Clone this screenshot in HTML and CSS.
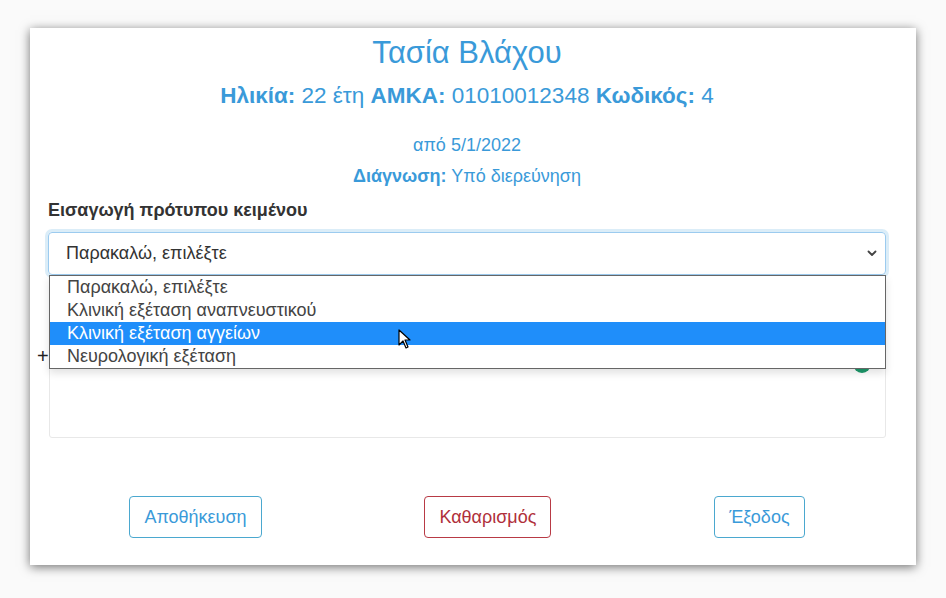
FILE: index.html
```html
<!DOCTYPE html>
<html lang="el">
<head>
    <meta charset="UTF-8">
    <meta name="viewport" content="width=device-width, initial-scale=1.0">
    <title>Ιστορικό ασθενή</title>
    <link rel="stylesheet" href="styles.css">
</head>
<body>
    <div class="modal">
        <h1 class="patient-name">Τασία Βλάχου</h1>
        <p class="patient-info">
            <b>Ηλικία:</b> 22 έτη <b>ΑΜΚΑ:</b> 01010012348 <b>Κωδικός:</b> 4
        </p>
        <p class="since">από 5/1/2022</p>
        <p class="diagnosis"><b>Διάγνωση:</b> Υπό διερεύνηση</p>

        <label class="field-label">Εισαγωγή πρότυπου κειμένου</label>
        <div class="select-wrap">
            <div class="select">
                <span>Παρακαλώ, επιλέξτε</span>
                <svg class="chevron" width="10" height="7" viewBox="0 0 10 7">
                    <path d="M1.5 1.5l3.5 3.5 3.5-3.5" fill="none" stroke="#444" stroke-width="1.8" stroke-linecap="round" stroke-linejoin="round"/>
                </svg>
            </div>
            <ul class="options">
                <li>Παρακαλώ, επιλέξτε</li>
                <li>Κλινική εξέταση αναπνευστικού</li>
                <li class="active">Κλινική εξέταση αγγείων</li>
                <li>Νευρολογική εξέταση</li>
            </ul>
            <svg class="cursor" width="14" height="20" viewBox="0 0 14 20">
                <path d="M1 1v15l4-4 3 7 2-1-3-7h5z" fill="#fff" stroke="#000" stroke-width="1.2" stroke-linejoin="round"/>
            </svg>
        </div>

        <div class="editor">
            <span class="editor-add">+</span>
            <span class="editor-dot"></span>
        </div>

        <div class="actions">
            <button class="btn btn-blue">Αποθήκευση</button>
            <button class="btn btn-red">Καθαρισμός</button>
            <button class="btn btn-blue">Έξοδος</button>
        </div>
    </div>
</body>
</html>
```

FILE: styles.css
```css
body {
    margin: 0;
    padding: 28px 30px;
    background-color: #fafafa;
    font-family: "Liberation Sans", Arial, sans-serif;
    color: #333;
}

.modal {
    width: 886px;
    height: 537px;
    box-sizing: border-box;
    padding: 7px 30px 0 18px;
    background-color: #fff;
    box-shadow: 0 2px 10px rgba(0, 0, 0, 0.55);
}

.patient-name {
    margin: 0;
    text-align: center;
    font-size: 31px;
    line-height: 36px;
    font-weight: normal;
    color: #3a9ad9;
}

.patient-info {
    margin: 12px 0 0;
    text-align: center;
    font-size: 22.5px;
    line-height: 26px;
    color: #3a9ad9;
}

.since,
.diagnosis {
    margin: 0;
    text-align: center;
    font-size: 18px;
    line-height: 20px;
    color: #3a9ad9;
}

.since {
    margin-top: 26px;
}

.diagnosis {
    margin-top: 11px;
}

.field-label {
    display: block;
    margin-top: 14px;
    font-size: 18px;
    line-height: 20px;
    font-weight: bold;
    color: #333;
}

.select-wrap {
    position: relative;
    margin-top: 12px;
}

.select {
    height: 43px;
    box-sizing: border-box;
    padding: 0 8px 0 17px;
    display: flex;
    align-items: center;
    justify-content: space-between;
    border: 1px solid #9ccbef;
    border-radius: 4px;
    box-shadow: 0 0 0 3px rgba(58, 154, 217, 0.18);
    font-size: 18px;
    color: #333;
}

.options {
    position: absolute;
    top: 43px;
    left: 1px;
    right: 0;
    margin: 0;
    padding: 0;
    list-style: none;
    background-color: #fff;
    border: 1px solid #666;
    box-shadow: 0 4px 8px rgba(0, 0, 0, 0.12);
    z-index: 2;
}

.options li {
    height: 23px;
    line-height: 22px;
    padding-left: 17px;
    font-size: 18px;
    color: #444;
}

.options li.active {
    background-color: #1f8efa;
    color: #fff;
}

.cursor {
    position: absolute;
    left: 350px;
    top: 97px;
    z-index: 3;
}

.editor {
    position: relative;
    margin-top: 69px;
    margin-left: 1px;
    height: 92px;
    border: 1px solid #e8e8e8;
    border-radius: 3px;
}

.editor-add {
    position: absolute;
    left: -13px;
    top: 0;
    font-size: 20px;
    line-height: 22px;
    color: #222;
}

.editor-dot {
    position: absolute;
    right: 14px;
    top: 10px;
    width: 18px;
    height: 18px;
    border-radius: 50%;
    background-color: #1d9a6c;
}

.actions {
    margin-top: 58px;
    display: flex;
    justify-content: space-around;
}

.btn {
    height: 42px;
    padding: 0 14px;
    background-color: #fff;
    border-radius: 4px;
    font-family: "Liberation Sans", Arial, sans-serif;
    font-size: 18px;
    cursor: pointer;
}

.btn-blue {
    border: 1px solid #4ba8cf;
    color: #3a9ad9;
}

.btn-red {
    border: 1px solid #b83a45;
    color: #b0303b;
}
```
